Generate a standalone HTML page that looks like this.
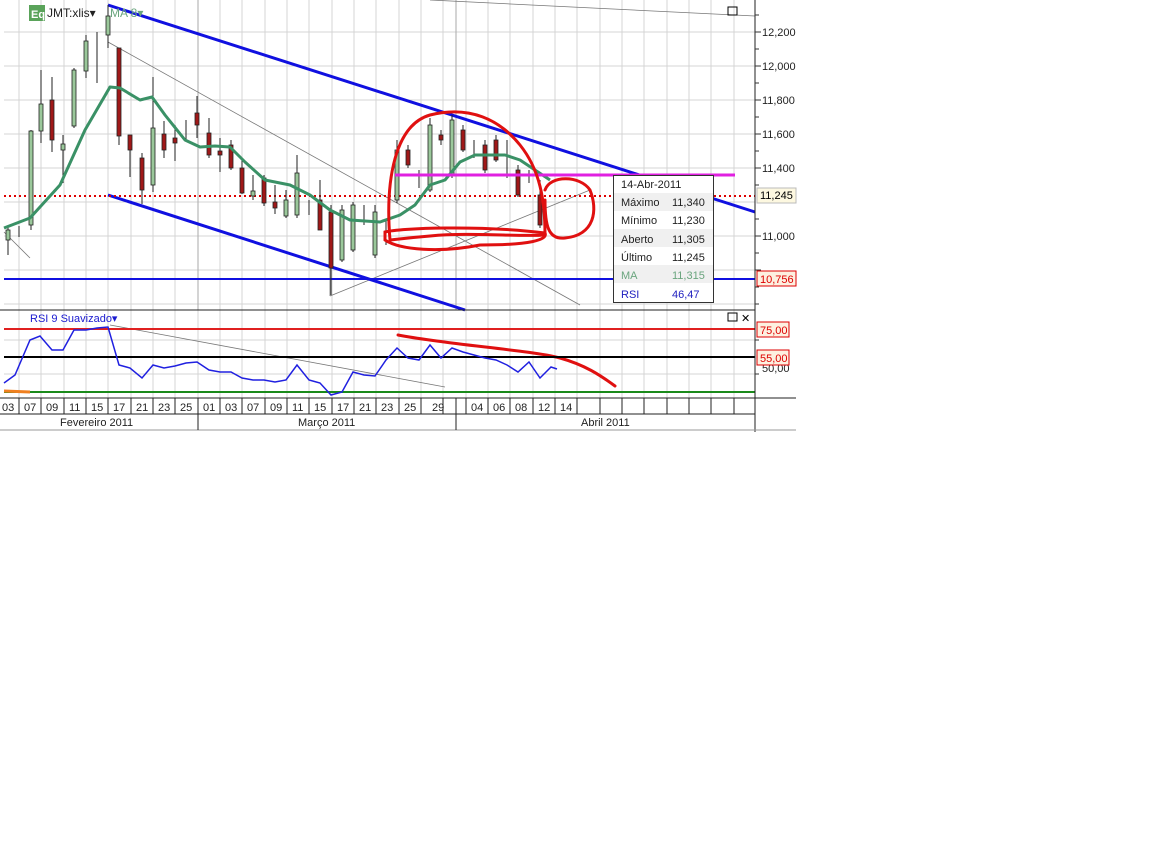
<!DOCTYPE html>
<html><head><meta charset="utf-8"><style>
html,body{margin:0;padding:0;background:#fff;width:1152px;height:864px;overflow:hidden}
svg{position:absolute;left:0;top:0;font-family:"Liberation Sans",sans-serif}
</style></head><body>
<svg width="1152" height="864" viewBox="0 0 1152 864">
<rect x="0" y="0" width="796" height="432" fill="#fff"/>
<!-- grid -->
<g stroke="#d4d4d4" stroke-width="1">
<line x1="4" y1="32" x2="755" y2="32"/><line x1="4" y1="66" x2="755" y2="66"/><line x1="4" y1="100" x2="755" y2="100"/><line x1="4" y1="134" x2="755" y2="134"/><line x1="4" y1="168" x2="755" y2="168"/><line x1="4" y1="202" x2="755" y2="202"/><line x1="4" y1="236" x2="755" y2="236"/><line x1="4" y1="270" x2="755" y2="270"/><line x1="4" y1="304" x2="755" y2="304"/>
<line x1="4" y1="340" x2="755" y2="340"/><line x1="4" y1="374" x2="755" y2="374"/>
<path d="M19 0V398M41 0V398M64 0V398M86 0V398M108 0V398M131 0V398M153 0V398M175 0V398M198 0V398M220 0V398M242 0V398M265 0V398M287 0V398M309 0V398M332 0V398M354 0V398M376 0V398M399 0V398M421 0V398M443 0V398M466 0V398M488 0V398M510 0V398M533 0V398M555 0V398M577 0V398M600 0V398M622 0V398M644 0V398M667 0V398M689 0V398M711 0V398M734 0V398"/>
</g>
<line x1="198" y1="0" x2="198" y2="310" stroke="#aaa"/><line x1="456" y1="0" x2="456" y2="310" stroke="#aaa"/>
<g stroke="#777" stroke-width="0.8" fill="none">
<line x1="430" y1="0" x2="755" y2="16"/>
<line x1="108" y1="42" x2="580" y2="305"/>
<line x1="330" y1="296" x2="590" y2="190"/>
<line x1="330" y1="296" x2="330" y2="262"/>
<line x1="4" y1="232" x2="30" y2="258"/>
<line x1="110" y1="325" x2="445" y2="387"/>
</g>
<g stroke="#1010e0" stroke-width="3">
<line x1="108" y1="5" x2="755" y2="212"/>
<line x1="108" y1="195" x2="465" y2="310"/>
</g>
<line x1="4" y1="279" x2="755" y2="279" stroke="#1010e0" stroke-width="2"/>
<line x1="4" y1="196" x2="755" y2="196" stroke="#d00" stroke-width="2" stroke-dasharray="2,3"/>
<g stroke="#222" stroke-width="1">
<path d="M8 225V255M19 226V237M31 130V230M41 70V143M52 77V152M63 135V183M74 68V128M86 35V78M97 32V83M108 5V48M119 48V145M130 135V177M142 153V204M153 77V192M164 121V158M175 125V161M186 120V140M197 96V138M209 118V158M220 138V172M231 140V170M242 160V194M253 175V200M264 175V206M275 185V214M286 190V218M297 155V218M309 200V215M320 180V230M331 205V295M342 205V262M353 202V252M364 205V225M375 205V258M386 220V245M397 140V203M408 145V168M419 170V188M430 118V192M441 130V145M452 115V178M463 125V152M474 140V158M485 140V173M496 135V162M507 140V178M518 165V197M529 170V183M540 180V228"/>
</g>
<g stroke="#222" stroke-width="0.8" fill="#9bc89b">
<rect x="6" y="230" width="4" height="10"/><rect x="29" y="131" width="4" height="94"/><rect x="39" y="104" width="4" height="27"/><rect x="61" y="144" width="4" height="6"/><rect x="72" y="70" width="4" height="56"/><rect x="84" y="41" width="4" height="30"/><rect x="106" y="16" width="4" height="19"/><rect x="151" y="128" width="4" height="57"/><rect x="251" y="191" width="4" height="5"/><rect x="284" y="200" width="4" height="16"/><rect x="295" y="173" width="4" height="42"/><rect x="340" y="210" width="4" height="50"/><rect x="351" y="205" width="4" height="45"/><rect x="373" y="212" width="4" height="43"/><rect x="395" y="150" width="4" height="50"/><rect x="428" y="125" width="4" height="65"/><rect x="450" y="120" width="4" height="55"/>
</g>
<g stroke="#222" stroke-width="0.8" fill="#a01818">
<rect x="50" y="100" width="4" height="40"/><rect x="117" y="48" width="4" height="88"/><rect x="128" y="135" width="4" height="15"/><rect x="140" y="158" width="4" height="32"/><rect x="162" y="134" width="4" height="16"/><rect x="173" y="138" width="4" height="5"/><rect x="195" y="113" width="4" height="12"/><rect x="207" y="133" width="4" height="22"/><rect x="218" y="151" width="4" height="4"/><rect x="229" y="145" width="4" height="23"/><rect x="240" y="168" width="4" height="25"/><rect x="262" y="178" width="4" height="25"/><rect x="273" y="202" width="4" height="6"/><rect x="318" y="200" width="4" height="30"/><rect x="329" y="212" width="4" height="56"/><rect x="406" y="150" width="4" height="15"/><rect x="439" y="135" width="4" height="5"/><rect x="461" y="130" width="4" height="20"/><rect x="483" y="145" width="4" height="25"/><rect x="494" y="140" width="4" height="20"/><rect x="516" y="170" width="4" height="25"/><rect x="538" y="195" width="4" height="30"/>
</g>
<polyline fill="none" stroke="#3a9166" stroke-width="3" stroke-linejoin="round" points="4,228 30,218 60,185 85,130 110,87 120,88 140,100 152,97 165,115 185,140 200,147 215,146 230,147 245,162 265,180 290,185 310,195 330,210 350,220 380,222 400,215 415,205 430,185 445,180 460,162 475,155 490,155 505,155 520,160 535,170 550,180"/>
<line x1="395" y1="175" x2="735" y2="175" stroke="#e020e0" stroke-width="3"/>
<g fill="none" stroke="#e01010" stroke-width="3" stroke-linecap="round">
<path d="M390 240 C385 180 395 125 430 115 C470 105 500 120 520 145 C540 170 545 200 545 235 C520 237 470 232 430 236 C405 238 392 240 390 240"/>
<path d="M385 232 C400 228 480 225 545 233 C548 240 530 245 480 245 C440 253 400 250 385 240 Z"/>
<path d="M545 190 C550 175 580 175 590 190 C598 210 595 235 565 238 C548 240 545 225 545 200"/>
<path d="M398 335 C450 345 530 350 560 358 C585 365 600 375 615 386"/>
</g>
<rect x="29" y="5" width="16" height="16" fill="#5aa35a"/><text x="31" y="18" font-size="11" fill="#fff" font-weight="bold">Eq</text>
<text x="47" y="17" font-size="12" fill="#222">JMT:xlis▾</text>
<text x="110" y="17" font-size="12" fill="#6aa57e">MA 8▾</text>
<rect x="728" y="7" width="9" height="8" fill="none" stroke="#000"/>
<line x1="0" y1="310" x2="755" y2="310" stroke="#222"/>
<text x="30" y="322" font-size="11" fill="#1a1ad0">RSI 9 Suavizado▾</text>
<rect x="728" y="313" width="9" height="8" fill="none" stroke="#000"/><text x="741" y="322" font-size="11">✕</text>
<line x1="4" y1="329" x2="755" y2="329" stroke="#e02020" stroke-width="2"/>
<line x1="4" y1="357" x2="755" y2="357" stroke="#000" stroke-width="2"/>
<line x1="4" y1="392" x2="755" y2="392" stroke="#1a8a1a" stroke-width="2"/>
<line x1="4" y1="391" x2="30" y2="392" stroke="#f08020" stroke-width="3"/>
<polyline fill="none" stroke="#2020e0" stroke-width="1.5" points="4,383 15,375 30,340 40,336 52,350 63,350 74,330 86,330 97,328 108,327 119,365 130,368 142,378 153,365 164,368 175,366 186,363 197,362 209,370 220,372 231,372 242,378 253,380 264,380 275,382 286,380 297,365 309,380 320,383 331,395 342,392 353,372 364,375 375,376 386,360 397,348 408,358 419,360 430,345 441,358 452,348 463,352 474,355 485,358 496,360 507,365 518,372 529,362 540,378 551,367 557,369"/>
<line x1="755" y1="0" x2="755" y2="432" stroke="#222"/>
<g stroke="#333"><path d="M755 15h4M755 32h6M755 49h4M755 66h6M755 83h4M755 100h6M755 117h4M755 134h6M755 151h4M755 168h6M755 185h4M755 219h4M755 236h6M755 253h4M755 270h6M755 287h4M755 304h4M755 340h4M755 374h4"/></g>
<g font-size="11" fill="#222">
<text x="762" y="36">12,200</text><text x="762" y="70">12,000</text><text x="762" y="104">11,800</text><text x="762" y="138">11,600</text><text x="762" y="172">11,400</text><text x="762" y="240">11,000</text><text x="762" y="372">50,00</text>
</g>
<rect x="757" y="188" width="39" height="15" fill="#fdf8e0" stroke="#bbb"/><text x="760" y="199" font-size="11">11,245</text>
<rect x="757" y="271" width="39" height="15" fill="#fdf0e0" stroke="#d00"/><text x="760" y="283" font-size="11" fill="#d00">10,756</text>
<rect x="757" y="322" width="32" height="15" fill="#fdf0e0" stroke="#d00"/><text x="760" y="334" font-size="11" fill="#d00">75,00</text>
<rect x="757" y="350" width="32" height="15" fill="#fdf0e0" stroke="#d00"/><text x="760" y="362" font-size="11" fill="#d00">55,00</text>
<line x1="0" y1="398" x2="796" y2="398" stroke="#222"/>
<line x1="0" y1="414" x2="755" y2="414" stroke="#222"/>
<line x1="0" y1="430" x2="796" y2="430" stroke="#999"/>
<g stroke="#222"><path d="M19 398v16M41 398v16M64 398v16M86 398v16M108 398v16M131 398v16M153 398v16M175 398v16M198 398v32M220 398v16M242 398v16M265 398v16M287 398v16M309 398v16M332 398v16M354 398v16M376 398v16M399 398v16M421 398v16M443 398v16M456 398v32M466 398v16M488 398v16M510 398v16M533 398v16M555 398v16M577 398v16M600 398v16M622 398v16M644 398v16M667 398v16M689 398v16M711 398v16M734 398v16"/></g>
<g font-size="11" fill="#222">
<text x="2" y="411">03</text><text x="24" y="411">07</text><text x="46" y="411">09</text><text x="69" y="411">11</text><text x="91" y="411">15</text><text x="113" y="411">17</text><text x="136" y="411">21</text><text x="158" y="411">23</text><text x="180" y="411">25</text><text x="203" y="411">01</text><text x="225" y="411">03</text><text x="247" y="411">07</text><text x="270" y="411">09</text><text x="292" y="411">11</text><text x="314" y="411">15</text><text x="337" y="411">17</text><text x="359" y="411">21</text><text x="381" y="411">23</text><text x="404" y="411">25</text><text x="432" y="411">29</text><text x="471" y="411">04</text><text x="493" y="411">06</text><text x="515" y="411">08</text><text x="538" y="411">12</text><text x="560" y="411">14</text>
<text x="60" y="426">Fevereiro 2011</text><text x="298" y="426">Março 2011</text><text x="581" y="426">Abril 2011</text>
</g>
<rect x="613.5" y="175.5" width="100" height="127" fill="#fff" stroke="#333"/>
<g fill="#f0f0f0"><rect x="614" y="193" width="99" height="18"/><rect x="614" y="229" width="99" height="18"/><rect x="614" y="265" width="99" height="18"/></g>
<g font-size="11" fill="#222">
<text x="621" y="188">14-Abr-2011</text>
<text x="621" y="206">Máximo</text><text x="672" y="206">11,340</text>
<text x="621" y="224">Mínimo</text><text x="672" y="224">11,230</text>
<text x="621" y="243">Aberto</text><text x="672" y="243">11,305</text>
<text x="621" y="261">Último</text><text x="672" y="261">11,245</text>
<text x="621" y="279" fill="#6aa57e">MA</text><text x="672" y="279" fill="#6aa57e">11,315</text>
<text x="621" y="298" fill="#2020c0">RSI</text><text x="672" y="298" fill="#2020c0">46,47</text>
</g>
</svg>
</body></html>
